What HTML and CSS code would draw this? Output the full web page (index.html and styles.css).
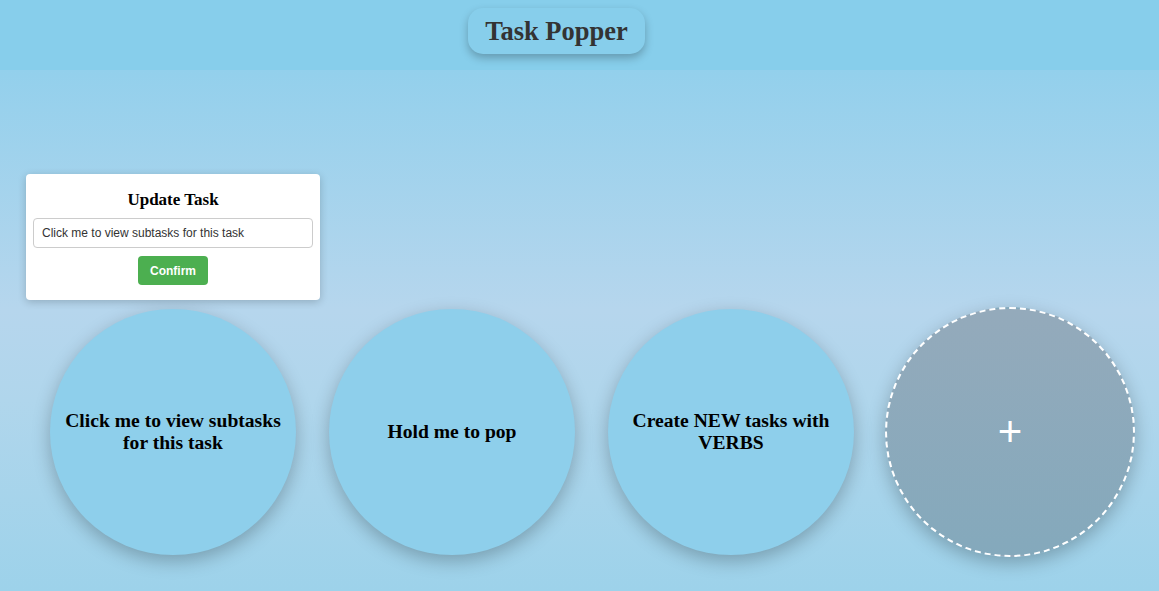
FILE: index.html
```html
<!DOCTYPE html>
<html>
<head>
<meta charset="utf-8">
<title>Task Popper</title>
<link rel="stylesheet" href="styles.css">
</head>
<body>
<header class="topbar">
  <h1 class="title">Task Popper</h1>
</header>
<main class="stage">
  <div class="bubbles">
    <div class="bubble">Click me to view subtasks for this task</div>
    <div class="bubble">Hold me to pop</div>
    <div class="bubble">Create NEW tasks with VERBS</div>
    <div class="bubble add">+</div>
  </div>
  <div class="modal">
    <h2 class="modal-title">Update Task</h2>
    <input class="modal-input" type="text" value="Click me to view subtasks for this task">
    <button class="confirm">Confirm</button>
  </div>
</main>
</body>
</html>
```

FILE: styles.css
```css
html, body {
  margin: 0;
  height: 100%;
}
body {
  font-family: "Liberation Serif", "Times New Roman", serif;
  background: linear-gradient(to bottom, #87ceeb 0px, #93d0ec 70px, #b6d6ed 310px, #b0d6ec 400px, #9dd2ea 591px);
  overflow: hidden;
}
.topbar {
  height: 70px;
  background: #87ceeb;
  display: flex;
  justify-content: center;
  align-items: flex-start;
}
.title {
  margin: 8px 46px 0 0;
  height: 46px;
  box-sizing: border-box;
  padding: 0 17px;
  display: flex;
  align-items: center;
  background: #87ceeb;
  border-radius: 15px;
  box-shadow: 0 4px 8px rgba(0, 0, 0, 0.25);
  font-size: 26.5px;
  font-weight: bold;
  color: #333;
}
.stage {
  position: relative;
  height: 521px;
}
.bubbles {
  display: flex;
  gap: 33px;
  padding: 239px 0 0 50px;
}
.bubble {
  width: 246px;
  height: 246px;
  flex: none;
  border-radius: 50%;
  background: #8ecfeb;
  box-shadow: 0 6px 18px rgba(0, 0, 0, 0.25);
  display: flex;
  align-items: center;
  justify-content: center;
  text-align: center;
  padding: 0 12px;
  box-sizing: border-box;
  font-size: 19.6px;
  font-weight: bold;
  line-height: 22px;
  color: #000;
}
.bubble.add {
  width: 250px;
  height: 250px;
  border: 2px dashed #fff;
  background: linear-gradient(to bottom, #94aabb, #84a9bc);
  color: #fff;
  font-family: "Liberation Sans", Arial, sans-serif;
  font-weight: normal;
  font-size: 42px;
  margin-top: -2px;
  margin-left: -2px;
}
.modal {
  position: absolute;
  left: 26px;
  top: 104px;
  width: 294px;
  height: 126px;
  box-sizing: border-box;
  background: #fff;
  border-radius: 4px;
  box-shadow: 0 2px 8px rgba(0, 0, 0, 0.2);
  padding: 16px 7px 0;
  display: flex;
  flex-direction: column;
  align-items: center;
}
.modal-title {
  margin: 0 0 8px;
  font-size: 17px;
  line-height: 20px;
  font-weight: bold;
  color: #000;
}
.modal-input {
  width: 280px;
  height: 30px;
  box-sizing: border-box;
  border: 1px solid #ccc;
  border-radius: 4px;
  padding: 0 8px;
  font-family: "Liberation Sans", Arial, sans-serif;
  font-size: 12px;
  color: #333;
  margin: 0 0 8px;
}
.confirm {
  width: 70px;
  height: 29px;
  border: none;
  border-radius: 4px;
  background: #4caf50;
  color: #fff;
  font-family: "Liberation Sans", Arial, sans-serif;
  font-size: 12px;
  font-weight: bold;
}
```
